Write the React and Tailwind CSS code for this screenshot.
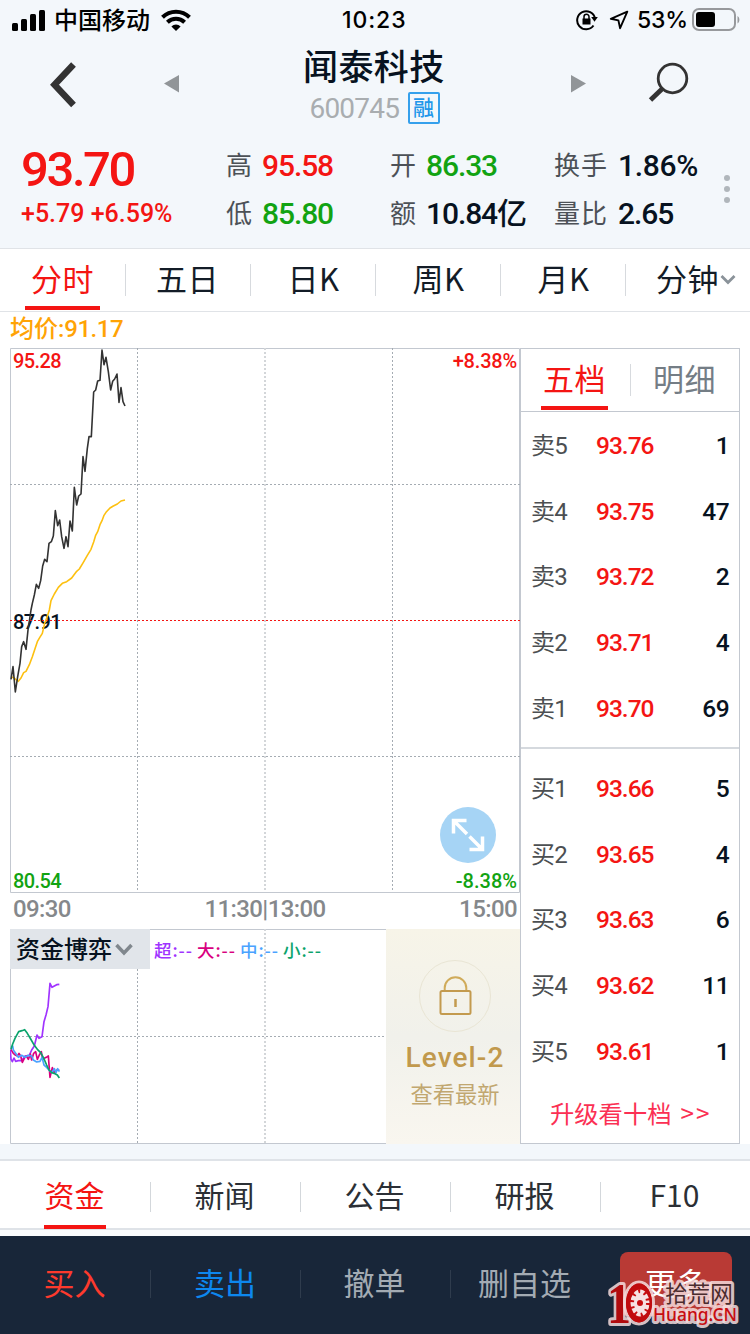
import clsx from 'clsx';

const stats = [
  [
    { label: '高', value: '95.58', color: 'text-[#f41513]' },
    { label: '低', value: '85.80', color: 'text-[#12a312]' },
  ],
  [
    { label: '开', value: '86.33', color: 'text-[#12a312]' },
    { label: '额', value: '10.84亿', color: 'text-[#071220]' },
  ],
  [
    { label: '换手', value: '1.86%', color: 'text-[#071220]' },
    { label: '量比', value: '2.65', color: 'text-[#071220]' },
  ],
];

const periods = ['分时', '五日', '日K', '周K', '月K', '分钟'];
const infoTabs = ['资金', '新闻', '公告', '研报', 'F10'];

const sells = [
  ['卖5', '93.76', 1],
  ['卖4', '93.75', 47],
  ['卖3', '93.72', 2],
  ['卖2', '93.71', 4],
  ['卖1', '93.70', 69],
];

const buys = [
  ['买1', '93.66', 5],
  ['买2', '93.65', 4],
  ['买3', '93.63', 6],
  ['买4', '93.62', 11],
  ['买5', '93.61', 1],
];

const flows = [
  { name: '超', color: 'text-[#a033ff]' },
  { name: '大', color: 'text-[#d9007f]' },
  { name: '中', color: 'text-[#4aa3ff]' },
  { name: '小', color: 'text-[#0aa36c]' },
];

const pricePoints =
  '33,1018 39,980 46,1056 53,1010 60,970 65,920 71,905 78,928 84,870 93,810 97,790 103,765 109,733 116,745 122,722 128,678 134,658 141,665 147,610 154,605 160,588 166,512 173,557 179,540 185,590 192,625 198,590 204,620 210,543 217,573 223,442 230,495 236,468 243,462 249,350 255,394 262,325 267,290 274,290 281,156 287,150 293,123 300,121 306,30 312,74 318,52 325,95 332,150 338,124 344,117 351,102 357,187 363,143 369,185 375,198';
const avgPoints =
  '33,1012 40,1012 47,1018 55,1024 63,1014 71,998 78,994 88,974 97,950 105,926 112,905 119,893 127,880 134,850 141,832 148,810 153,782 163,762 175,742 187,730 200,725 215,714 230,694 238,687 250,667 262,646 273,628 281,606 287,586 293,575 300,554 306,542 312,526 318,517 330,504 340,498 352,492 363,483 375,480';

const superPoints =
  '31,240 33,268 37,275 42,264 47,274 55,272 65,272 75,258 88,256 95,240 103,228 111,195 117,205 126,200 132,155 138,135 144,110 150,40 156,52 163,48 170,44 178,43';
const bigPoints =
  '33,238 40,250 46,255 52,258 57,250 62,258 67,277 73,265 79,258 85,268 91,252 95,270 101,250 107,245 112,268 118,255 124,245 128,268 133,265 139,262 145,258 150,322 157,293 163,308 170,300 178,300';
const midPoints =
  '33,232 38,228 40,240 47,250 55,262 65,256 75,262 85,256 95,258 100,270 110,276 120,274 126,262 132,285 140,292 147,300 155,308 163,296 168,308 173,296 178,305';
const smallPoints =
  '33,238 38,222 45,205 56,185 66,182 74,179 82,190 92,207 103,226 112,238 122,248 130,262 140,285 147,300 155,308 165,311 172,315 178,324';

const Divider = ({ className }) => <span className={clsx('absolute -right-px w-px', className)} />;

const StatusBar = () => (
  <div className="flex h-10 items-center pl-3 text-black">
    <svg className="shrink-0" width="33" height="21" viewBox="0 0 33 21">
      <rect x="0" y="13" width="6" height="8" rx="1.5" />
      <rect x="9" y="9" width="6" height="12" rx="1.5" />
      <rect x="18" y="4" width="6" height="17" rx="1.5" />
      <rect x="27" y="0" width="6" height="21" rx="1.5" />
    </svg>
    <span className="ml-[9px] w-24 shrink-0 whitespace-nowrap pb-[3px] text-[24px] font-medium leading-9">中国移动</span>
    <svg className="ml-[11px] shrink-0" width="30" height="22" viewBox="0 0 30 22" fill="none" stroke="#000" strokeWidth="4">
      <path d="M1.5 8.2a19.3 19.3 0 0 1 27 0" />
      <path d="M6.4 13.2a12.3 12.3 0 0 1 17.2 0" />
      <path d="M15 22l-4.6-4.6a6.6 6.6 0 0 1 9.2 0z" fill="#000" stroke="none" />
    </svg>
    <span className="ml-[151px] w-[70px] shrink-0 font-[Inter] text-[23px] font-medium tracking-[0.9px]">10:23</span>
    <svg className="ml-[164px] shrink-0" width="23" height="22" viewBox="0 0 23 22" fill="none" stroke="#000" strokeWidth="2">
      <path d="M17.5 16.5A9 9 0 1 1 19 9.5" />
      <path d="M15.2 8h6.6l-3.3 4.8z" fill="#000" stroke="none" />
      <rect x="6.5" y="9.5" width="8" height="6" fill="#000" stroke="none" />
      <path d="M8 10V7.8a2.5 2.5 0 0 1 5 0V10" strokeWidth="1.5" />
    </svg>
    <svg className="ml-[10px] shrink-0" width="20" height="20" viewBox="0 0 20 20" fill="none" stroke="#000" strokeWidth="1.9" strokeLinejoin="round">
      <path d="M18.3 1.7L1.800 8.800l7.600 1.600 1.700 7.800z" />
    </svg>
    <span className="ml-[8px] w-[55px] shrink-0 whitespace-nowrap font-[Inter] text-[23px] font-medium tracking-[-0.2px]">53%</span>
    <svg className="shrink-0" width="49" height="24" viewBox="0 0 49 24" fill="none">
      <rect x="1" y="1" width="42" height="21" rx="6" stroke="#97999c" strokeWidth="2" />
      <rect x="4" y="4" width="19" height="15" rx="3" fill="#000" />
      <path d="M45.500 8c2.500 1.500 2.500 6 0 7.500z" fill="#97999c" />
    </svg>
  </div>
);

const Header = () => (
  <div className="flex h-[96px] items-start">
    <svg className="ml-[50px] mt-[22px]" width="28" height="46" viewBox="0 0 28 46" fill="none" stroke="#333" strokeWidth="6.500">
      <path d="M23.500 2.500L4.500 22.800l19 20.200" />
    </svg>
    <svg className="ml-[86px] mt-[34px]" width="16" height="19" viewBox="0 0 16 19" fill="#919598">
      <path d="M0 9.500L15 1v17.500z" />
    </svg>
    <div className="ml-[92px] mr-[94px] flex w-[204px] flex-col items-center">
      <h1 className="mt-[3px] w-[142px] whitespace-nowrap text-[35px] font-medium leading-[44px] tracking-[0.4px] text-[#071220]">闻泰科技</h1>
      <div className="mt-[4px] flex items-center gap-[8px] pl-px">
        <span className="w-[90px] whitespace-nowrap pt-[3px] font-[Roboto] text-[28px] leading-[30px] tracking-[-0.8px] text-[#a9adb0]">600745</span>
        <span className="h-8 w-8 rounded-[2px] border-2 border-[#35a0ec] text-center text-[21px] font-medium leading-[25px] text-[#2196ea]">融</span>
      </div>
    </div>
    <svg className="mt-[34px]" width="16" height="19" viewBox="0 0 16 19" fill="#919598">
      <path d="M16 9.500L1 1v17.500z" />
    </svg>
    <svg className="ml-[62px] mt-[22px]" width="42" height="42" viewBox="0 0 42 42" fill="none" stroke="#333">
      <circle cx="24.500" cy="16.500" r="14.300" strokeWidth="2.800" />
      <path d="M14 27L2.500 38" strokeWidth="4.800" />
    </svg>
  </div>
);

const Quote = () => (
  <div className="flex h-[112px] pl-[21px]">
    <div className="w-[205px] font-[Roboto] text-[#f41513]">
      <div className="mt-[9px] text-[49px] font-medium leading-[50px] tracking-[-2.4px]">93.70</div>
      <div className="mt-[3px] whitespace-nowrap text-[25px] font-medium leading-8">+5.79 +6.59%</div>
    </div>
    {stats.map((column, i) => (
      <div key={i} className="w-[164px] pt-[6px]">
        {column.map((item) => (
          <div key={item.label} className="flex h-12 items-center whitespace-nowrap">
            <span className={clsx('pb-[4px] text-[26px] leading-8 tracking-[1px] text-[#4c5157]', i === 2 ? 'w-[64px]' : 'w-9')}>{item.label}</span>
            <span
              className={clsx(
                'font-[Roboto,Noto_Sans_CJK_SC] text-[30px] font-medium leading-8',
                item.value.endsWith('%') ? 'tracking-[-0.3px]' : 'tracking-[-1.1px]',
                item.color
              )}
            >
              {item.value}
            </span>
          </div>
        ))}
      </div>
    ))}
    <div className="ml-[6px] mt-[39px] flex flex-col gap-[5px]">
      <i className="size-[6px] rounded-full bg-[#b0b6bb]" />
      <i className="size-[6px] rounded-full bg-[#b0b6bb]" />
      <i className="size-[6px] rounded-full bg-[#b0b6bb]" />
    </div>
  </div>
);

const PeriodTabs = () => (
  <nav className="grid h-[64px] grid-cols-6 border-y border-[#e0e3e7] bg-white">
    {periods.map((name, i) => (
      <div
        key={name}
        className={clsx('relative flex justify-center text-[31px] leading-[57px] tracking-[0.5px]', i === 0 ? 'text-[#f41513]' : 'text-[#131c27]', name.endsWith('K') && 'pl-0.5')}
      >
        {name}
        {i === 0 && <span className="absolute bottom-[1px] h-1 w-[75px] bg-[#f41513]" />}
        {i < 5 && <Divider className="top-[15px] h-8 bg-[#d7dade]" />}
        {i === 5 && (
          <svg className="absolute left-[95px] top-[25px]" width="16" height="12" viewBox="0 0 16 12" fill="none" stroke="#8a9299" strokeWidth="2.800">
            <path d="M1.500 2L8 8.500 14.500 2" />
          </svg>
        )}
      </div>
    ))}
  </nav>
);

const PriceChart = () => (
  <div className="relative flex h-[545px] w-[510px] flex-col justify-between pt-px font-[Roboto] text-[20px] font-medium leading-6">
    <div className="flex justify-between px-[3px] text-[#f41513]">
      <span className="tracking-[-0.6px]">95.28</span>
      <span className="tracking-[-0.2px]">+8.38%</span>
    </div>
    <div className="pl-[3px] pt-px tracking-[-0.6px] text-[#071220]">87.91</div>
    <div className="flex justify-between px-[3px] text-[#12a312]">
      <span className="tracking-[-0.6px]">80.54</span>
      <span>-8.38%</span>
    </div>
    <svg className="absolute inset-0" width="510" height="545" viewBox="0 0 510 545" fill="none">
      <path d="M.5 .5h509v544h-509z" stroke="#c3c8d0" />
      <path d="M127.500 0v544M382.500 0v544M0 136.500h510M0 408.500h510" stroke="#a5acb3" strokeDasharray="2 2" />
      <path d="M255 0v544" stroke="#d3d6d9" strokeWidth="2" strokeDasharray="2 2" />
      <path d="M0 272.500h510" stroke="#f41513" strokeDasharray="2 2" />
      <g transform="translate(-10 -8) scale(.33333)" strokeWidth="4.800" strokeLinejoin="round">
        <polyline points={avgPoints} stroke="#fdc010" />
        <polyline points={pricePoints} stroke="#333" />
      </g>
    </svg>
    <button className="absolute left-[430px] top-[459px] flex size-14 items-center justify-center rounded-full bg-[#a6d4f5]">
      <svg width="34" height="34" viewBox="0 0 34 34" fill="none" stroke="#fff" strokeWidth="3.500">
        <path d="M15.500 2.500h-13v13M2.500 2.500l13.500 13.500M18.500 31.500h13v-13M31.500 31.500L18.500 18.500" />
      </svg>
    </button>
  </div>
);

const FundChart = () => (
  <div className="relative h-[215px] w-[376px]">
    <svg className="absolute inset-0" width="376" height="215" viewBox="0 0 376 215" fill="none">
      <path d="M376 .5H.5v214H376" stroke="#c3c8d0" />
      <path d="M127.500 0v214M0 107.500h376" stroke="#a5acb3" strokeDasharray="2 2" />
      <path d="M255 0v214" stroke="#d3d6d9" strokeWidth="2" strokeDasharray="2 2" />
      <g transform="translate(-10 41) scale(.33333)" strokeWidth="5" strokeLinejoin="round">
        <polyline points={superPoints} stroke="#a033ff" />
        <polyline points={bigPoints} stroke="#d9007f" />
        <polyline points={midPoints} stroke="#4aa3ff" />
        <polyline points={smallPoints} stroke="#0aa36c" />
      </g>
    </svg>
    <div className="relative flex h-10 items-center">
      <div className="flex h-10 w-[140px] items-center bg-[#e1e5ea] pl-[6px] text-[24px] font-medium leading-9 text-[#071220]">
        <span className="pb-[3px]">资金博弈</span>
        <svg className="ml-[3px]" width="18" height="13" viewBox="0 0 18 13" fill="none" stroke="#80878d" strokeWidth="3.500">
          <path d="M1.500 2L9 10l7.500-8" />
        </svg>
      </div>
      <div className="flex pl-[4px] pt-[3px] text-[17.5px] font-medium tracking-[0.9px]">
        {flows.map((flow) => (
          <span key={flow.name} className={clsx('w-[43px] whitespace-nowrap', flow.color)}>{flow.name}:--</span>
        ))}
      </div>
    </div>
  </div>
);

const LevelTwo = () => (
  <div className="flex h-[215px] w-[134px] flex-col items-center bg-linear-to-b from-[#f7f4e8] via-[#f1f1eb] to-[#f9f6ef] pl-[4px]">
    <div className="mt-[31px] flex size-[72px] items-center justify-center rounded-full border border-[#e9e5d4]">
      <svg width="33" height="40" viewBox="0 0 33 40" fill="none" stroke="#c39a4e" strokeWidth="2">
        <path d="M5.700 15V12a10.800 10.800 0 0 1 21.600 0v3" stroke="#d0ab5a" />
        <rect x="1.500" y="15" width="30" height="23" rx="1.500" />
        <path d="M16.500 23v8" strokeWidth="2.500" />
      </svg>
    </div>
    <div className="mt-[9px] whitespace-nowrap font-[Roboto] text-[28px] font-medium leading-[34px] tracking-[1.1px] text-[#c1994d]">Level-2</div>
    <div className="mt-[2px] text-[22.3px] leading-8 text-[#c1a770]">查看最新</div>
  </div>
);

const OrderRows = ({ rows }) => (
  <div className="grid h-[329px] grid-rows-5">
    {rows.map(([label, price, volume]) => (
      <div key={label} className="flex items-center px-[10px] font-[Roboto,Noto_Sans_CJK_SC] text-[24.5px] font-medium leading-8">
        <span className="w-[65px] text-[24px] font-normal tracking-[-0.8px] text-[#4c4f52]">{label}</span>
        <span className="tracking-[-1px] text-[#f41513]">{price}</span>
        <span className="ml-auto tracking-[-0.6px] text-[#071220]">{volume}</span>
      </div>
    ))}
  </div>
);

const OrderBook = () => (
  <section className="flex h-[796px] w-[220px] flex-col border border-[#c3c8d0]">
    <div className="relative flex h-[63px] border-b border-[#c3c8d0] text-[31px] leading-[58px] tracking-[0.5px]">
      <div className="relative flex w-[109px] justify-center pr-[2px] text-[#f41513]">
        五档
        <span className="absolute bottom-[1px] h-1 w-[67px] bg-[#f41513]" />
        <Divider className="top-[15px] h-8 bg-[#d7dade]" />
      </div>
      <div className="flex w-[109px] justify-center text-[#747d85]">明细</div>
    </div>
    <div className="h-[337px] border-b-2 border-[#d5d9de] pt-px">
      <OrderRows rows={sells} />
    </div>
    <div className="pt-[7px]">
      <OrderRows rows={buys} />
    </div>
    <a className="whitespace-nowrap pl-[29px] text-[24.3px] leading-[56px] text-[#fb3053]">
      升级看十档<span className="ml-[9px] tracking-[2px]">&gt;&gt;</span>
    </a>
  </section>
);

const InfoTabs = () => (
  <nav className="grid h-[71px] grid-cols-5 border-y-2 border-[#dfe3e8] bg-white">
    {infoTabs.map((name, i) => (
      <div
        key={name}
        className={clsx('relative flex justify-center pr-px text-[30px] leading-[66px]', i === 0 ? 'text-[#f41513]' : 'text-[#2b2f35]')}
      >
        {name}
        {i === 0 && <span className="absolute -bottom-[1px] h-1 w-[62px] bg-[#f41513]" />}
        {i < 4 && <Divider className="top-[21px] h-[30px] bg-[#d3d7db]" />}
      </div>
    ))}
  </nav>
);

const Watermark = () => (
  <div className="absolute left-[604px] top-[38px] h-[60px] w-[146px] whitespace-nowrap">
    <svg width="146" height="60" viewBox="0 -6 146 60" overflow="visible" paintOrder="stroke" strokeLinejoin="round" fill="none">
      <g stroke="#f4dcdd" strokeOpacity=".85" strokeWidth="6">
        <text x="61" y="22" fontSize="23" fill="#4a2c2e" textLength="68">拾荒网</text>
        <text x="49" y="41" fontSize="18" fill="#c80d10" fontWeight="500" fontFamily="Noto Sans" textLength="84" lengthAdjust="spacingAndGlyphs">Huang.CN</text>
        <text x="3" y="43" fontSize="56" fill="#b00a0d" fontWeight="700" fontFamily="Liberation Serif" textLength="24" lengthAdjust="spacingAndGlyphs">1</text>
        <ellipse cx="35" cy="23" rx="13" ry="19.500" fill="#c80d10" />
      </g>
      <ellipse cx="35" cy="23" rx="13" ry="19.500" fill="#c00b0e" />
      <ellipse cx="36" cy="23" rx="9.500" ry="13.500" fill="#f6e2e3" />
      <ellipse cx="36" cy="23" rx="8" ry="12" stroke="#c80d10" strokeWidth="4" strokeDasharray="2 4.500" />
      <circle cx="36" cy="23" r="3" fill="#c80d10" />
    </svg>
  </div>
);

const ActionBar = () => (
  <footer className="relative grid h-[98px] grid-cols-5 bg-[#182639] text-[31px] leading-[92px] text-[#a3abb3]">
    <div className="relative pr-px text-center text-[#fd3a2d]">买入<Divider className="top-[34px] h-7 bg-[#2f3c4d]" /></div>
    <div className="relative text-center text-[#0d87ee]">卖出<Divider className="top-[34px] h-7 bg-[#2f3c4d]" /></div>
    <div className="relative pr-px text-center">撤单<Divider className="top-[34px] h-7 bg-[#2f3c4d]" /></div>
    <div className="pr-px text-center">删自选</div>
    <div className="flex items-start pl-5 pt-4">
      <button className="h-16 w-28 rounded-lg bg-[#b93a35] pb-1 leading-[60px] text-white">更多</button>
    </div>
    <Watermark />
  </footer>
);

const App = () => {
  return (
    <div className="h-[1334px] w-[750px] overflow-hidden bg-[#f3f7fb] font-['Noto_Sans_CJK_SC',sans-serif]">
      <StatusBar />
      <Header />
      <Quote />
      <PeriodTabs />
      <main className="h-[832px] bg-white px-[10px]">
        <div className="h-9 font-[Roboto,Noto_Sans_CJK_SC] text-[24px] font-medium leading-[34px] text-[#ffa305]">
          均价:<span className="tracking-[-0.5px]">91.17</span>
        </div>
        <div className="flex">
          <div className="w-[510px]">
            <PriceChart />
            <div className="grid h-9 grid-cols-[1fr_auto_1fr] px-[3px] font-[Roboto] text-[24px] font-medium leading-8 tracking-[-0.6px] text-[#85888b]">
              <span>09:30</span>
              <span>11:30|13:00</span>
              <span className="text-right">15:00</span>
            </div>
            <div className="flex">
              <FundChart />
              <LevelTwo />
            </div>
          </div>
          <OrderBook />
        </div>
      </main>
      <div className="h-[15px]" />
      <InfoTabs />
      <div className="h-[6px] bg-[#fafcfd]" />
      <ActionBar />
    </div>
  );
};

export default App;
